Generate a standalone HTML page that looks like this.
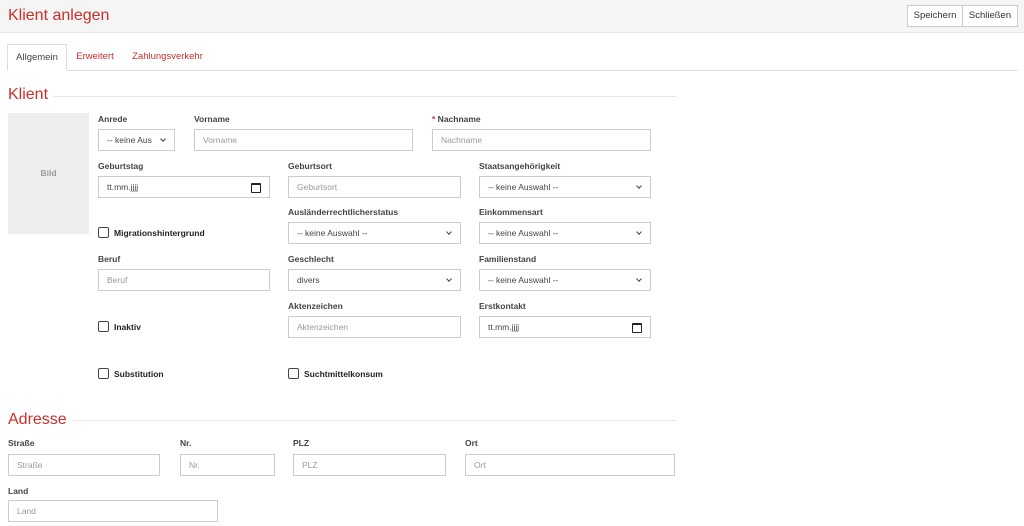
<!DOCTYPE html>
<html><head><meta charset="utf-8"><style>
*{box-sizing:border-box;margin:0;padding:0}
body{width:1024px;height:526px;overflow:hidden;background:#fff;font-family:"Liberation Sans",sans-serif;position:relative;color:#333}
.a{position:absolute}
.hdr{left:0;top:0;width:1024px;height:33px;background:#f5f5f5;border-bottom:1px solid #e6e6e6}
.title{left:8px;top:7px;font-size:16px;color:#c9302c}
.btn{top:5px;height:22px;border:1px solid #ccc;background:#fff;font-size:9.5px;line-height:20px;text-align:center;color:#333}
.tabline{left:7px;top:70px;width:1011px;height:1px;background:#ddd}
.tab{top:44px;height:27px;font-size:9.5px;line-height:26px;color:#c9302c;text-align:center}
.tab.act{border:1px solid #ddd;border-bottom:1px solid #fff;background:#fff;color:#444}
.h{font-size:16px;color:#c9302c}
.hl{height:1px;background:#e6e6e6}
.l{font-size:8.5px;font-weight:bold;color:#444}
.i{height:22px;border:1px solid #ccc;background:#fff;font-size:8.5px;color:#999;line-height:20px;padding-left:8px}
.s{color:#444}
.s:after{content:"";position:absolute;right:9px;top:7px;width:3px;height:3px;border-right:1.3px solid #444;border-bottom:1.3px solid #444;transform:rotate(45deg)}
.d{color:#444}
.d:after{content:"";position:absolute;right:8px;top:6px;width:8px;height:7px;border:1.3px solid #222;border-top-width:2.5px;border-radius:1px}
.cb{width:11px;height:11px;border:1.3px solid #444;border-radius:2px}
.cl{font-size:8.5px;font-weight:bold;color:#222}
</style></head><body>
<div class="a hdr"></div>
<div class="a title">Klient anlegen</div>
<div class="a btn" style="left:907px;width:56px">Speichern</div>
<div class="a btn" style="left:962px;width:56px">Schließen</div>
<div class="a tabline"></div>
<div class="a tab act" style="left:7px;width:60px">Allgemein</div>
<div class="a tab" style="left:72px;width:46px">Erweitert</div>
<div class="a tab" style="left:130px;width:75px">Zahlungsverkehr</div>

<div class="a h" style="left:8px;top:86px">Klient</div>
<div class="a hl" style="left:53px;top:96px;width:623px"></div>
<div class="a" style="left:8px;top:113px;width:81px;height:121px;background:#eee;font-size:8.5px;font-weight:bold;color:#999;text-align:center;line-height:120px">Bild</div>

<div class="a l" style="left:98px;top:114px">Anrede</div>
<div class="a i s" style="left:98px;top:129px;width:77px">-- keine Aus</div>
<div class="a l" style="left:194px;top:114px">Vorname</div>
<div class="a i" style="left:194px;top:129px;width:219px">Vorname</div>
<div class="a l" style="left:432px;top:114px"><span style="color:#c9302c">*</span> Nachname</div>
<div class="a i" style="left:432px;top:129px;width:219px">Nachname</div>

<div class="a l" style="left:98px;top:161px">Geburtstag</div>
<div class="a i d" style="left:98px;top:176px;width:172px">tt.mm.jjjj</div>
<div class="a l" style="left:288px;top:161px">Geburtsort</div>
<div class="a i" style="left:288px;top:176px;width:173px">Geburtsort</div>
<div class="a l" style="left:479px;top:161px">Staatsangehörigkeit</div>
<div class="a i s" style="left:479px;top:176px;width:172px">-- keine Auswahl --</div>

<div class="a cb" style="left:98px;top:227px"></div>
<div class="a cl" style="left:114px;top:228px">Migrationshintergrund</div>
<div class="a l" style="left:288px;top:207px">Ausländerrechtlicherstatus</div>
<div class="a i s" style="left:288px;top:222px;width:173px">-- keine Auswahl --</div>
<div class="a l" style="left:479px;top:207px">Einkommensart</div>
<div class="a i s" style="left:479px;top:222px;width:172px">-- keine Auswahl --</div>

<div class="a l" style="left:98px;top:254px">Beruf</div>
<div class="a i" style="left:98px;top:269px;width:172px">Beruf</div>
<div class="a l" style="left:288px;top:254px">Geschlecht</div>
<div class="a i s" style="left:288px;top:269px;width:173px">divers</div>
<div class="a l" style="left:479px;top:254px">Familienstand</div>
<div class="a i s" style="left:479px;top:269px;width:172px">-- keine Auswahl --</div>

<div class="a cb" style="left:98px;top:321px"></div>
<div class="a cl" style="left:114px;top:322px">Inaktiv</div>
<div class="a l" style="left:288px;top:301px">Aktenzeichen</div>
<div class="a i" style="left:288px;top:316px;width:173px">Aktenzeichen</div>
<div class="a l" style="left:479px;top:301px">Erstkontakt</div>
<div class="a i d" style="left:479px;top:316px;width:172px">tt.mm.jjjj</div>

<div class="a cb" style="left:98px;top:368px"></div>
<div class="a cl" style="left:114px;top:369px">Substitution</div>
<div class="a cb" style="left:288px;top:368px"></div>
<div class="a cl" style="left:304px;top:369px">Suchtmittelkonsum</div>

<div class="a h" style="left:8px;top:411px">Adresse</div>
<div class="a hl" style="left:72px;top:420px;width:604px"></div>
<div class="a l" style="left:8px;top:438px">Straße</div>
<div class="a i" style="left:8px;top:454px;width:152px">Straße</div>
<div class="a l" style="left:180px;top:438px">Nr.</div>
<div class="a i" style="left:180px;top:454px;width:95px">Nr.</div>
<div class="a l" style="left:293px;top:438px">PLZ</div>
<div class="a i" style="left:293px;top:454px;width:153px">PLZ</div>
<div class="a l" style="left:465px;top:438px">Ort</div>
<div class="a i" style="left:465px;top:454px;width:210px">Ort</div>
<div class="a l" style="left:8px;top:486px">Land</div>
<div class="a i" style="left:8px;top:500px;width:210px">Land</div>
</body></html>
